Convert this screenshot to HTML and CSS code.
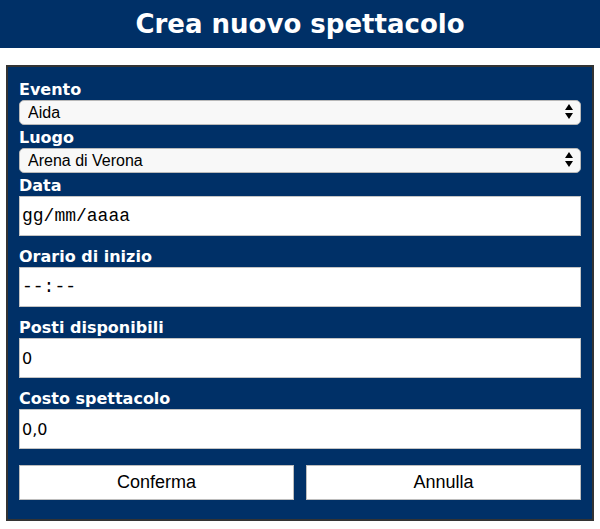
FILE: index.html
```html
<!DOCTYPE html>
<html lang="it">
<head>
<meta charset="utf-8">
<title>Crea nuovo spettacolo</title>
<link rel="stylesheet" href="styles.css">
</head>
<body>
<header class="topbar">
  <h1 class="title">Crea nuovo spettacolo</h1>
</header>
<form class="panel">
  <label class="lbl lbl-first">Evento</label>
  <div class="sel-wrap">
    <select class="sel"><option>Aida</option></select>
    <svg class="sel-arrows" width="8" height="15" viewBox="0 0 8 15"><path d="M4 0 L8 6 L0 6 Z M0 9 L8 9 L4 15 Z" fill="#000"/></svg>
  </div>
  <label class="lbl">Luogo</label>
  <div class="sel-wrap">
    <select class="sel"><option>Arena di Verona</option></select>
    <svg class="sel-arrows" width="8" height="15" viewBox="0 0 8 15"><path d="M4 0 L8 6 L0 6 Z M0 9 L8 9 L4 15 Z" fill="#000"/></svg>
  </div>
  <label class="lbl">Data</label>
  <input class="inp mono" type="text" value="gg/mm/aaaa">
  <label class="lbl lbl-gap">Orario di inizio</label>
  <input class="inp mono" type="text" value="--:--">
  <label class="lbl lbl-gap">Posti disponibili</label>
  <input class="inp" type="text" value="0">
  <label class="lbl lbl-gap">Costo spettacolo</label>
  <input class="inp" type="text" value="0,0">
  <div class="actions">
    <button type="button" class="btn">Conferma</button>
    <button type="button" class="btn">Annulla</button>
  </div>
</form>
</body>
</html>
```
FILE: styles.css
```css
html, body {
  margin: 0;
  padding: 0;
  background: #ffffff;
}
body {
  font-family: "DejaVu Sans", Verdana, sans-serif;
}
.topbar {
  background: #003067;
  height: 48px;
  display: flex;
  align-items: center;
  justify-content: center;
}
.title {
  margin: 0;
  color: #ffffff;
  font-size: 26px;
  font-weight: bold;
  line-height: 48px;
}
.panel {
  margin: 17px 6px 0 6px;
  border: 2px solid #333333;
  background: #003067;
  padding: 13px 11px 19px 11px;
  display: flex;
  flex-direction: column;
}
.lbl {
  display: block;
  color: #ffffff;
  font-weight: bold;
  font-size: 16px;
  line-height: 19px;
  height: 19px;
  margin-top: 3px;
}
.lbl-first {
  margin-top: 0;
}
.lbl-gap {
  margin-top: 11px;
}
.sel-wrap {
  position: relative;
  margin-top: 1px;
  height: 25px;
}
.sel {
  appearance: none;
  -webkit-appearance: none;
  width: 100%;
  height: 25px;
  box-sizing: border-box;
  margin: 0;
  border: 1px solid #b9b9b9;
  border-radius: 5px;
  background: #f8f8f8;
  padding: 0 0 0 8px;
  font-family: "Liberation Sans", Arial, sans-serif;
  font-size: 16px;
  color: #000;
}
.sel-arrows {
  position: absolute;
  right: 8px;
  top: 4px;
}
.inp {
  display: block;
  margin: 1px 0 0 0;
  width: 100%;
  height: 40px;
  box-sizing: border-box;
  border: 1px solid #c4c4c4;
  background: #ffffff;
  padding: 0 2px;
  font-family: "DejaVu Sans", Verdana, sans-serif;
  font-size: 16px;
  color: #000;
  outline: none;
}
.mono {
  font-family: "Liberation Mono", "Courier New", monospace;
  font-size: 18px;
}
.actions {
  display: flex;
  gap: 12px;
  margin-top: 16px;
}
.btn {
  flex: 1;
  height: 35px;
  margin: 0;
  border: 1px solid #bdbdbd;
  background: #ffffff;
  font-family: "Liberation Sans", Arial, sans-serif;
  font-size: 18px;
  color: #000;
  padding: 0;
}
```
